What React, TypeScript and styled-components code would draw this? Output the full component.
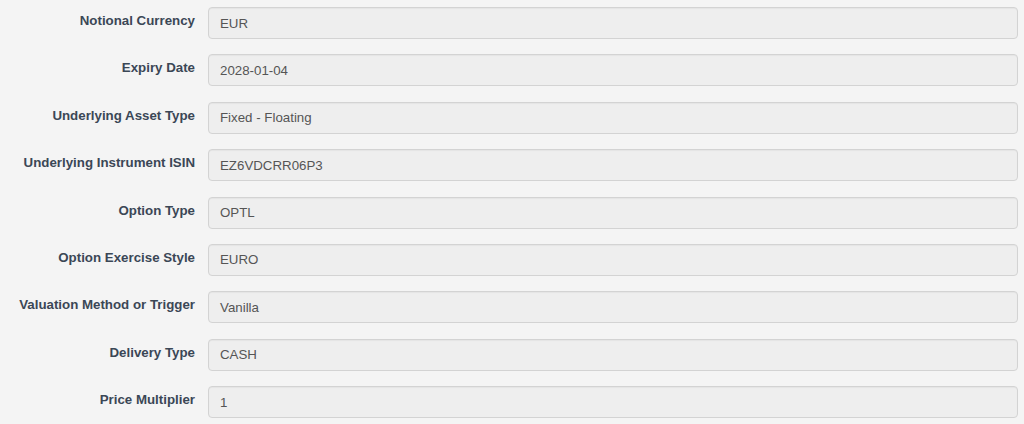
import styled, { createGlobalStyle } from 'styled-components';

const GlobalStyle = createGlobalStyle`
    html, body {
        margin: 0;
        padding: 0;
        background: #f4f4f4;
        font-family: "Liberation Sans", Arial, Helvetica, sans-serif;
    }
`

const Form = styled.div`
    display: flex;
    flex-direction: column;
    padding: 7px 6px 0 0;
    box-sizing: border-box;
    width: 1024px;
    height: 424px;
    overflow: hidden;
`

const FormGroup = styled.div`
    display: flex;
    align-items: flex-start;
    gap: 13px;
    height: 32px;
    margin-bottom: 15.375px;
    flex-shrink: 0;
`

const Label = styled.label`
    width: 195px;
    flex-shrink: 0;
    text-align: right;
    font-size: 13.3px;
    font-weight: bold;
    color: #3b4756;
    line-height: 18px;
    padding-top: 5px;
    white-space: nowrap;
`

const Field = styled.div`
    flex: 1;
    height: 32px;
    box-sizing: border-box;
    background: #eeeeee;
    border: 1px solid #d3d3d3;
    border-radius: 4px;
    box-shadow: inset 0 1px 1px rgba(0, 0, 0, 0.04);
    padding: 0 11px;
    display: flex;
    align-items: center;
    font-size: 13.3px;
    color: #555555;
`

const fields = [
    ['Notional Currency', 'EUR'],
    ['Expiry Date', '2028-01-04'],
    ['Underlying Asset Type', 'Fixed - Floating'],
    ['Underlying Instrument ISIN', 'EZ6VDCRR06P3'],
    ['Option Type', 'OPTL'],
    ['Option Exercise Style', 'EURO'],
    ['Valuation Method or Trigger', 'Vanilla'],
    ['Delivery Type', 'CASH'],
    ['Price Multiplier', '1'],
]

function App(){
    return (
        <>
            <GlobalStyle />
            <Form>
                {fields.map(([label, value]) => (
                    <FormGroup key={label}>
                        <Label>{label}</Label>
                        <Field>{value}</Field>
                    </FormGroup>
                ))}
            </Form>
        </>
    )
}

export default App
